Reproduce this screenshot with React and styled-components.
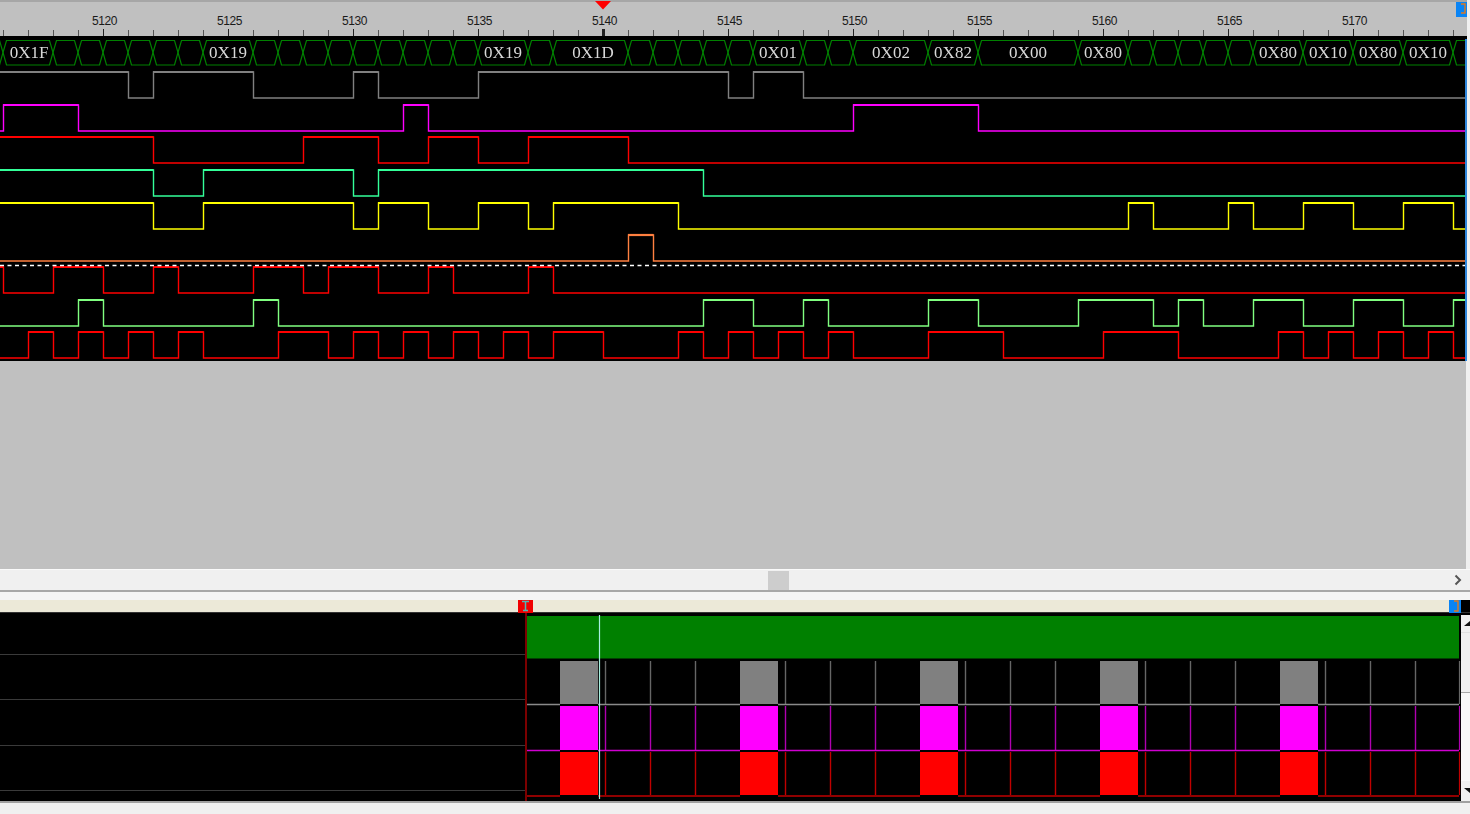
import React from 'react';
import styled, { createGlobalStyle } from 'styled-components';

const GlobalStyle = createGlobalStyle`
  html, body {
    margin: 0;
    padding: 0;
    background: #f0f0f0;
    overflow: hidden;
  }
`;

// one clock cycle is 25px wide, 5116 sits at x = 3.5
const CYCLE = 25;
const FIRST_TICK = 3.5;
const TRACE_WIDTH = 1465;

const BUS = [
  [-22, 3], [3, 53, '0X1F', 29], [53, 78], [78, 103], [103, 128], [128, 153], [153, 178], [178, 203],
  [203, 253, '0X19', 228], [253, 278], [278, 303], [303, 328], [328, 353], [353, 378], [378, 403],
  [403, 428], [428, 453], [453, 478], [478, 528, '0X19', 503], [528, 553], [553, 628, '0X1D', 593],
  [628, 653], [653, 678], [678, 703], [703, 728], [728, 753], [753, 803, '0X01', 778], [803, 828],
  [828, 853], [853, 928, '0X02', 891], [928, 978, '0X82', 953], [978, 1078, '0X00', 1028],
  [1078, 1128, '0X80', 1103], [1128, 1153], [1153, 1178], [1178, 1203], [1203, 1228], [1228, 1253],
  [1253, 1303, '0X80', 1278], [1303, 1353, '0X10', 1328], [1353, 1403, '0X80', 1378],
  [1403, 1453, '0X10', 1428], [1453, 1478],
];

const TRACES = [
  { color: '#808080', high: 33, start: 1, edges: [128, 153, 253, 353, 378, 478, 728, 753, 803] },
  { color: '#ff00ff', high: 66, start: 0, edges: [3, 78, 403, 428, 853, 978] },
  { color: '#ff0000', high: 98, start: 1, edges: [153, 303, 378, 428, 478, 528, 628] },
  { color: '#33ff99', high: 131, start: 1, edges: [153, 203, 353, 378, 703] },
  { color: '#ffff00', high: 164, start: 1, edges: [153, 203, 353, 378, 428, 478, 528, 553, 678, 1128, 1153, 1228, 1253, 1303, 1353, 1403, 1453] },
  { color: '#ff8040', high: 196, start: 0, edges: [628, 653] },
  { color: '#ff0000', high: 228, start: 1, edges: [3, 53, 103, 153, 178, 253, 303, 328, 378, 428, 453, 528, 553] },
  { color: '#80ff80', high: 261, start: 0, edges: [78, 103, 253, 278, 703, 753, 803, 828, 928, 978, 1078, 1153, 1178, 1203, 1253, 1303, 1353, 1403, 1453] },
  { color: '#ff0000', high: 293, start: 0, edges: [28, 53, 78, 103, 128, 153, 178, 203, 278, 328, 353, 378, 403, 428, 453, 478, 503, 528, 553, 603, 678, 703, 728, 753, 778, 803, 828, 853, 928, 1003, 1103, 1178, 1278, 1303, 1328, 1353, 1378, 1403, 1428, 1453] },
];

const BURSTS = [560, 740, 920, 1100, 1280];
const LOWER_ROWS = [
  { fill: '#808080', base: '#8a8a8a', stem: '#666666', top: 48, bottom: 91, line: 91.5 },
  { fill: '#ff00ff', base: '#d000d0', stem: '#b000b0', top: 93, bottom: 137, line: 137.5 },
  { fill: '#ff0000', base: '#c00000', stem: '#c00000', top: 139, bottom: 182, line: 183 },
];

const Page = styled.div`
  display: flex;
  flex-direction: column;
  width: 1470px;
  height: 814px;
  overflow: hidden;
  background: #f0f0f0;
`;

const RulerBar = styled.div`
  position: relative;
  flex: none;
  width: 1467px;
  height: 39px;
  background: #c0c0c0;
`;

const RulerSvg = styled.svg`
  display: block;
`;

const RulerLabel = styled.text`
  font-family: "Liberation Sans", Arial, sans-serif;
  font-size: 12px;
  letter-spacing: -0.4px;
  fill: #1a1a1a;
  text-anchor: middle;
`;

const WaveRow = styled.div`
  display: flex;
  flex: none;
  height: 322px;
`;

const WaveCanvas = styled.svg`
  display: block;
  flex: none;
  background: #000;
  filter: blur(0.25px);
`;

const EdgeLine = styled.div`
  flex: none;
  width: 2px;
  background: #2f86dc;
`;

const BusLabel = styled.text`
  font-family: "Liberation Serif", "Times New Roman", serif;
  font-size: 17px;
  fill: #d8d8d8;
  text-anchor: middle;
`;

const EmptyArea = styled.div`
  flex: none;
  width: 1466px;
  height: 208px;
  background: #c0c0c0;
`;

const HScroll = styled.div`
  display: flex;
  align-items: center;
  justify-content: center;
  position: relative;
  flex: none;
  height: 20px;
  background: #f0f0f0;
  border-top: 1px solid #fafafa;
  border-bottom: 2px solid #a8a8a8;
  box-sizing: content-box;
`;

const HThumb = styled.div`
  width: 21px;
  height: 19px;
  margin-left: 86px;
  background: #cdcdcd;
`;

const ScrollArrow = styled.svg`
  position: absolute;
  right: 7px;
  top: 4px;
`;

const Gap = styled.div`
  flex: none;
  height: 8px;
  background: #f5f5f5;
`;

const MarkerBar = styled.div`
  position: relative;
  flex: none;
  height: 12px;
  background: #ece9d8;
`;

const MarkerCorner = styled.div`
  position: absolute;
  right: 0;
  top: 0;
  width: 9px;
  height: 12px;
  background: #000;
`;

const Marker = styled.svg`
  position: absolute;
  top: ${({ $top }) => $top}px;
  left: ${({ $left }) => $left}px;
`;

const LowerPanel = styled.div`
  display: flex;
  flex: none;
  height: 189px;
  background: #000;
  border-top: 1px solid #333;
  box-sizing: border-box;
`;

const NameColumn = styled.div`
  flex: none;
  width: 525px;
  display: flex;
  flex-direction: column;
  padding-top: 41px;
  box-sizing: border-box;
`;

const NameRow = styled.div`
  flex: none;
  height: 45.33px;
  box-sizing: border-box;
  border-top: 1px solid #3a3a3a;
`;

const Plot = styled.svg`
  display: block;
  flex: none;
  background: #000;
  filter: blur(0.2px);
`;

const VScroll = styled.div`
  flex: none;
  display: flex;
  flex-direction: column;
  width: 9px;
  margin-top: 2px;
  background: #f9f9f9;
`;

const VButton = styled.div`
  flex: none;
  height: ${({ $height }) => $height}px;
  background: #f0f0f0;
  border-bottom: 1px solid ${({ $edge }) => $edge};
  box-sizing: border-box;
  display: flex;
  align-items: center;
  padding-left: 3px;
`;

const VTrack = styled.div`
  flex: 1;
`;

const FootLine = styled.div`
  flex: none;
  height: 2px;
  background: #a0a0a0;
`;

const Footer = styled.div`
  flex: 1;
  background: #f0f0f0;
`;

const tracePaths = ({ high, start, edges }) => {
  const low = high + 26;
  let level = start;
  let x = 0;
  let line = `M0 ${level ? high : low}`;
  const tops = [];
  edges.forEach((edge) => {
    if (level) tops.push(`M${x} ${high}H${edge + 0.5}`);
    line += `H${edge + 0.5}V${level ? low : high}`;
    level = level ? 0 : 1;
    x = edge;
  });
  line += `H${TRACE_WIDTH}`;
  if (level) tops.push(`M${x} ${high}H${TRACE_WIDTH}`);
  return { line, tops: tops.join('') };
};

const Ruler = () => {
  const ticks = [];
  for (let i = 0; i < 59; i += 1) ticks.push(i);
  return (
    <RulerBar>
      <RulerSvg width="1467" height="39">
        <rect x="0" y="0" width="1467" height="2" fill="#a6a6a6" />
        {ticks.map((i) => {
          const x = FIRST_TICK + i * CYCLE;
          const major = i % 5 === 4;
          const current = i === 24;
          return (
            <line
              key={i}
              x1={x}
              x2={x}
              y1={major ? 29 : 30}
              y2="36"
              stroke={major ? '#222' : '#555'}
              strokeWidth={current ? 3 : 1}
            />
          );
        })}
        {[5120, 5125, 5130, 5135, 5140, 5145, 5150, 5155, 5160, 5165, 5170].map((n) => (
          <RulerLabel key={n} x={104.5 + (n - 5120) * CYCLE} y="25">{n}</RulerLabel>
        ))}
        <polygon points="595,1 611,1 603,9.5" fill="#ff0000" />
        <rect x="0" y="36" width="1467" height="3" fill="#000" />
        <rect x="1456" y="2" width="11" height="15" fill="#0a84f5" />
        <path d="M1461 4h4v9h-4" fill="none" stroke="#e07a20" strokeWidth="1.4" />
      </RulerSvg>
    </RulerBar>
  );
};

const Waves = () => (
  <WaveRow>
    <WaveCanvas width={TRACE_WIDTH} height="322">
      {BUS.map(([a, b, label, center]) => (
        <g key={a}>
          <path
            d={`M${a} 13.5L${a + 3.5} 1.5H${b - 3.5}L${b} 13.5L${b - 3.5} 26H${a + 3.5}Z`}
            fill="none"
            stroke="#008000"
            strokeWidth="1.2"
          />
          {label && <BusLabel x={center} y="19">{label}</BusLabel>}
        </g>
      ))}
      {TRACES.map((trace) => {
        const { line, tops } = tracePaths(trace);
        return (
          <g key={trace.high} fill="none" stroke={trace.color}>
            <path d={line} strokeWidth="1.4" />
            <path d={tops} strokeWidth="2.2" />
          </g>
        );
      })}
      <line x1="0" x2={TRACE_WIDTH} y1="226.5" y2="226.5" stroke="#fff" strokeWidth="1.4" strokeDasharray="4 3.5" />
    </WaveCanvas>
    <EdgeLine />
  </WaveRow>
);

const BottomPlot = () => (
  <Plot width="936" height="188">
    <rect x="2" y="3" width="932" height="42.5" fill="#008000" />
    {LOWER_ROWS.map((row) => (
      <g key={row.fill}>
        {BURSTS.map((x) => {
          const left = x - 525;
          return (
            <g key={x}>
              <rect x={left} y={row.top} width="38" height={row.bottom - row.top} fill={row.fill} />
              {[45, 90, 135].map((d) => (
                <line key={d} x1={left + d + 0.5} x2={left + d + 0.5} y1={row.top} y2={row.bottom} stroke={row.stem} strokeWidth="1.4" />
              ))}
              <line x1={left + 38} x2={Math.min(left + 180, 934)} y1={row.line} y2={row.line} stroke={row.base} strokeWidth="1.4" />
            </g>
          );
        })}
        <line x1="2" x2="35" y1={row.line} y2={row.line} stroke={row.base} strokeWidth="1.4" />
        <line x1="934.5" x2="934.5" y1={row.top} y2={row.bottom} stroke={row.stem} strokeWidth="1.2" />
      </g>
    ))}
    <line x1="1" x2="1" y1="0" y2="188" stroke="#b00000" strokeWidth="1.4" />
    <line x1="74.5" x2="74.5" y1="2" y2="186" stroke="#a8f0e0" strokeWidth="1.2" />
  </Plot>
);

const App = () => (
  <Page>
    <GlobalStyle />
    <Ruler />
    <Waves />
    <EmptyArea />
    <HScroll>
      <HThumb />
      <ScrollArrow width="10" height="12" viewBox="0 0 10 12">
        <path d="M2.5 1.5L7 6L2.5 10.5" fill="none" stroke="#555" strokeWidth="2" />
      </ScrollArrow>
    </HScroll>
    <Gap />
    <MarkerBar>
      <Marker $left={518} $top={0} width="15" height="13">
        <rect width="15" height="13" fill="#f00000" />
        <path d="M4 1.5h7M7.5 1.5v9M5 10.5h5" fill="none" stroke="#4fb8b8" strokeWidth="1.5" />
      </Marker>
      <Marker $left={1449} $top={0} width="12" height="13">
        <rect width="12" height="13" fill="#0a84f5" />
        <path d="M5 1h4v10h-4" fill="none" stroke="#e07a20" strokeWidth="1.4" />
      </Marker>
      <MarkerCorner />
    </MarkerBar>
    <LowerPanel>
      <NameColumn>
        <NameRow />
        <NameRow />
        <NameRow />
        <NameRow />
      </NameColumn>
      <BottomPlot />
      <VScroll>
        <VButton $height={18} $edge="#e0e0e0">
          <svg width="6" height="5"><polygon points="6,0 6,5 0,5" fill="#111" /></svg>
        </VButton>
        <VButton $height={60} $edge="#a8a8a8" />
        <VTrack />
        <VButton $height={20} $edge="#f0f0f0">
          <svg width="6" height="5"><polygon points="0,0 6,0 6,5" fill="#111" /></svg>
        </VButton>
      </VScroll>
    </LowerPanel>
    <FootLine />
    <Footer />
  </Page>
);

export default App;
